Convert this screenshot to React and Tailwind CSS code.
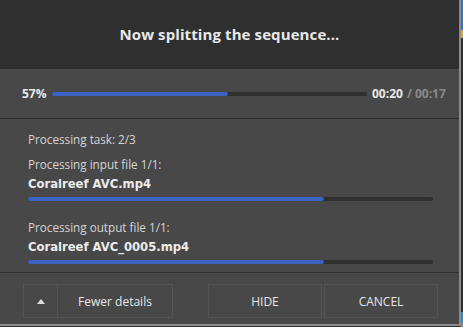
import React from "react";

const sans = { fontFamily: '"Open Sans", "Noto Sans", sans-serif' };
const bold = { fontFamily: '"DejaVu Sans", Verdana, sans-serif' };

function Bar({ pct, className }) {
  return (
    <div className={"h-[4px] shrink-0 rounded-full bg-[#303030] " + className}>
      <div className="h-full rounded-full bg-[#3a63c4]" style={{ width: pct + "%" }} />
    </div>
  );
}

export default function App() {
  return (
    <div className="w-[463px] h-[327px] flex bg-[#2f2f2f] overflow-hidden">
      <div className="w-[461px] h-[326px] flex flex-col border-r-2 border-b-2 border-[#8c8c8c] bg-[#484848]">
        <div className="h-[69px] shrink-0 bg-[#2f2f2f] flex items-center justify-center">
          <span className="text-[15px] font-bold text-[#e8e8e8] tracking-[0.1px]" style={sans}>
            Now splitting the sequence...
          </span>
        </div>
        <div className="h-[50px] shrink-0 flex items-center pl-[22px] whitespace-nowrap border-b border-[#303030]">
          <span className="text-[12px] font-bold text-[#e8e8e8] w-[30px] shrink-0" style={sans}>57%</span>
          <Bar pct={56} className="w-[315px]" />
          <span className="ml-[5px] text-[12px] font-bold text-[#e8e8e8]" style={sans}>00:20</span>
          <span className="ml-[4px] text-[12px] font-bold text-[#8a8a8a]" style={sans}>/ 00:17</span>
        </div>
        <div className="h-[154px] shrink-0 flex flex-col pl-[28px] pt-[11px] text-[#d6d6d6] border-b border-[#303030] whitespace-nowrap">
          <div className="text-[11.7px] leading-[18px]" style={sans}>Processing task: 2/3</div>
          <div className="mt-[7px] text-[11.7px] leading-[18px]" style={sans}>Processing input file 1/1:</div>
          <div className="mt-[3px] text-[11.6px] font-bold leading-[16px] text-[#ececec]" style={bold}>Coralreef AVC.mp4</div>
          <Bar pct={73} className="mt-[5px] w-[405px]" />
          <div className="mt-[17px] text-[11.7px] leading-[18px]" style={sans}>Processing output file 1/1:</div>
          <div className="mt-[3px] text-[11.6px] font-bold leading-[16px] text-[#ececec]" style={bold}>Coralreef AVC_0005.mp4</div>
          <Bar pct={73} className="mt-[5px] w-[405px]" />
        </div>
        <div className="flex-1 flex items-start pt-[11px] pl-[23px]">
          <div className="h-[34px] w-[150px] flex border border-[#545454]">
            <div className="w-[34px] flex items-center justify-center border-r border-[#545454]">
              <svg width="8" height="5" viewBox="0 0 8 5"><path d="M0 5 L4 0 L8 5 Z" fill="#e0e0e0" /></svg>
            </div>
            <div className="flex-1 flex items-center justify-center pt-[2px] text-[12px] text-[#e6e6e6]" style={sans}>
              Fewer details
            </div>
          </div>
          <div className="ml-[35px] h-[34px] w-[114px] flex items-center justify-center pt-[2px] border border-[#545454] text-[12px] text-[#e6e6e6]" style={sans}>
            HIDE
          </div>
          <div className="ml-[2px] h-[34px] w-[114px] flex items-center justify-center pt-[2px] border border-[#545454] text-[12px] text-[#e6e6e6]" style={sans}>
            CANCEL
          </div>
        </div>
      </div>
      <div className="w-[2px] h-full flex flex-col">
        <div className="h-[30px] bg-[#3b6fc4]" />
        <div className="h-[8px] bg-[#e0a040]" />
        <div className="h-[274px] bg-[#2f2f2f]" />
        <div className="h-[11px] bg-[#2a8ad0]" />
        <div className="flex-1 bg-[#8c8c8c]" />
      </div>
    </div>
  );
}
